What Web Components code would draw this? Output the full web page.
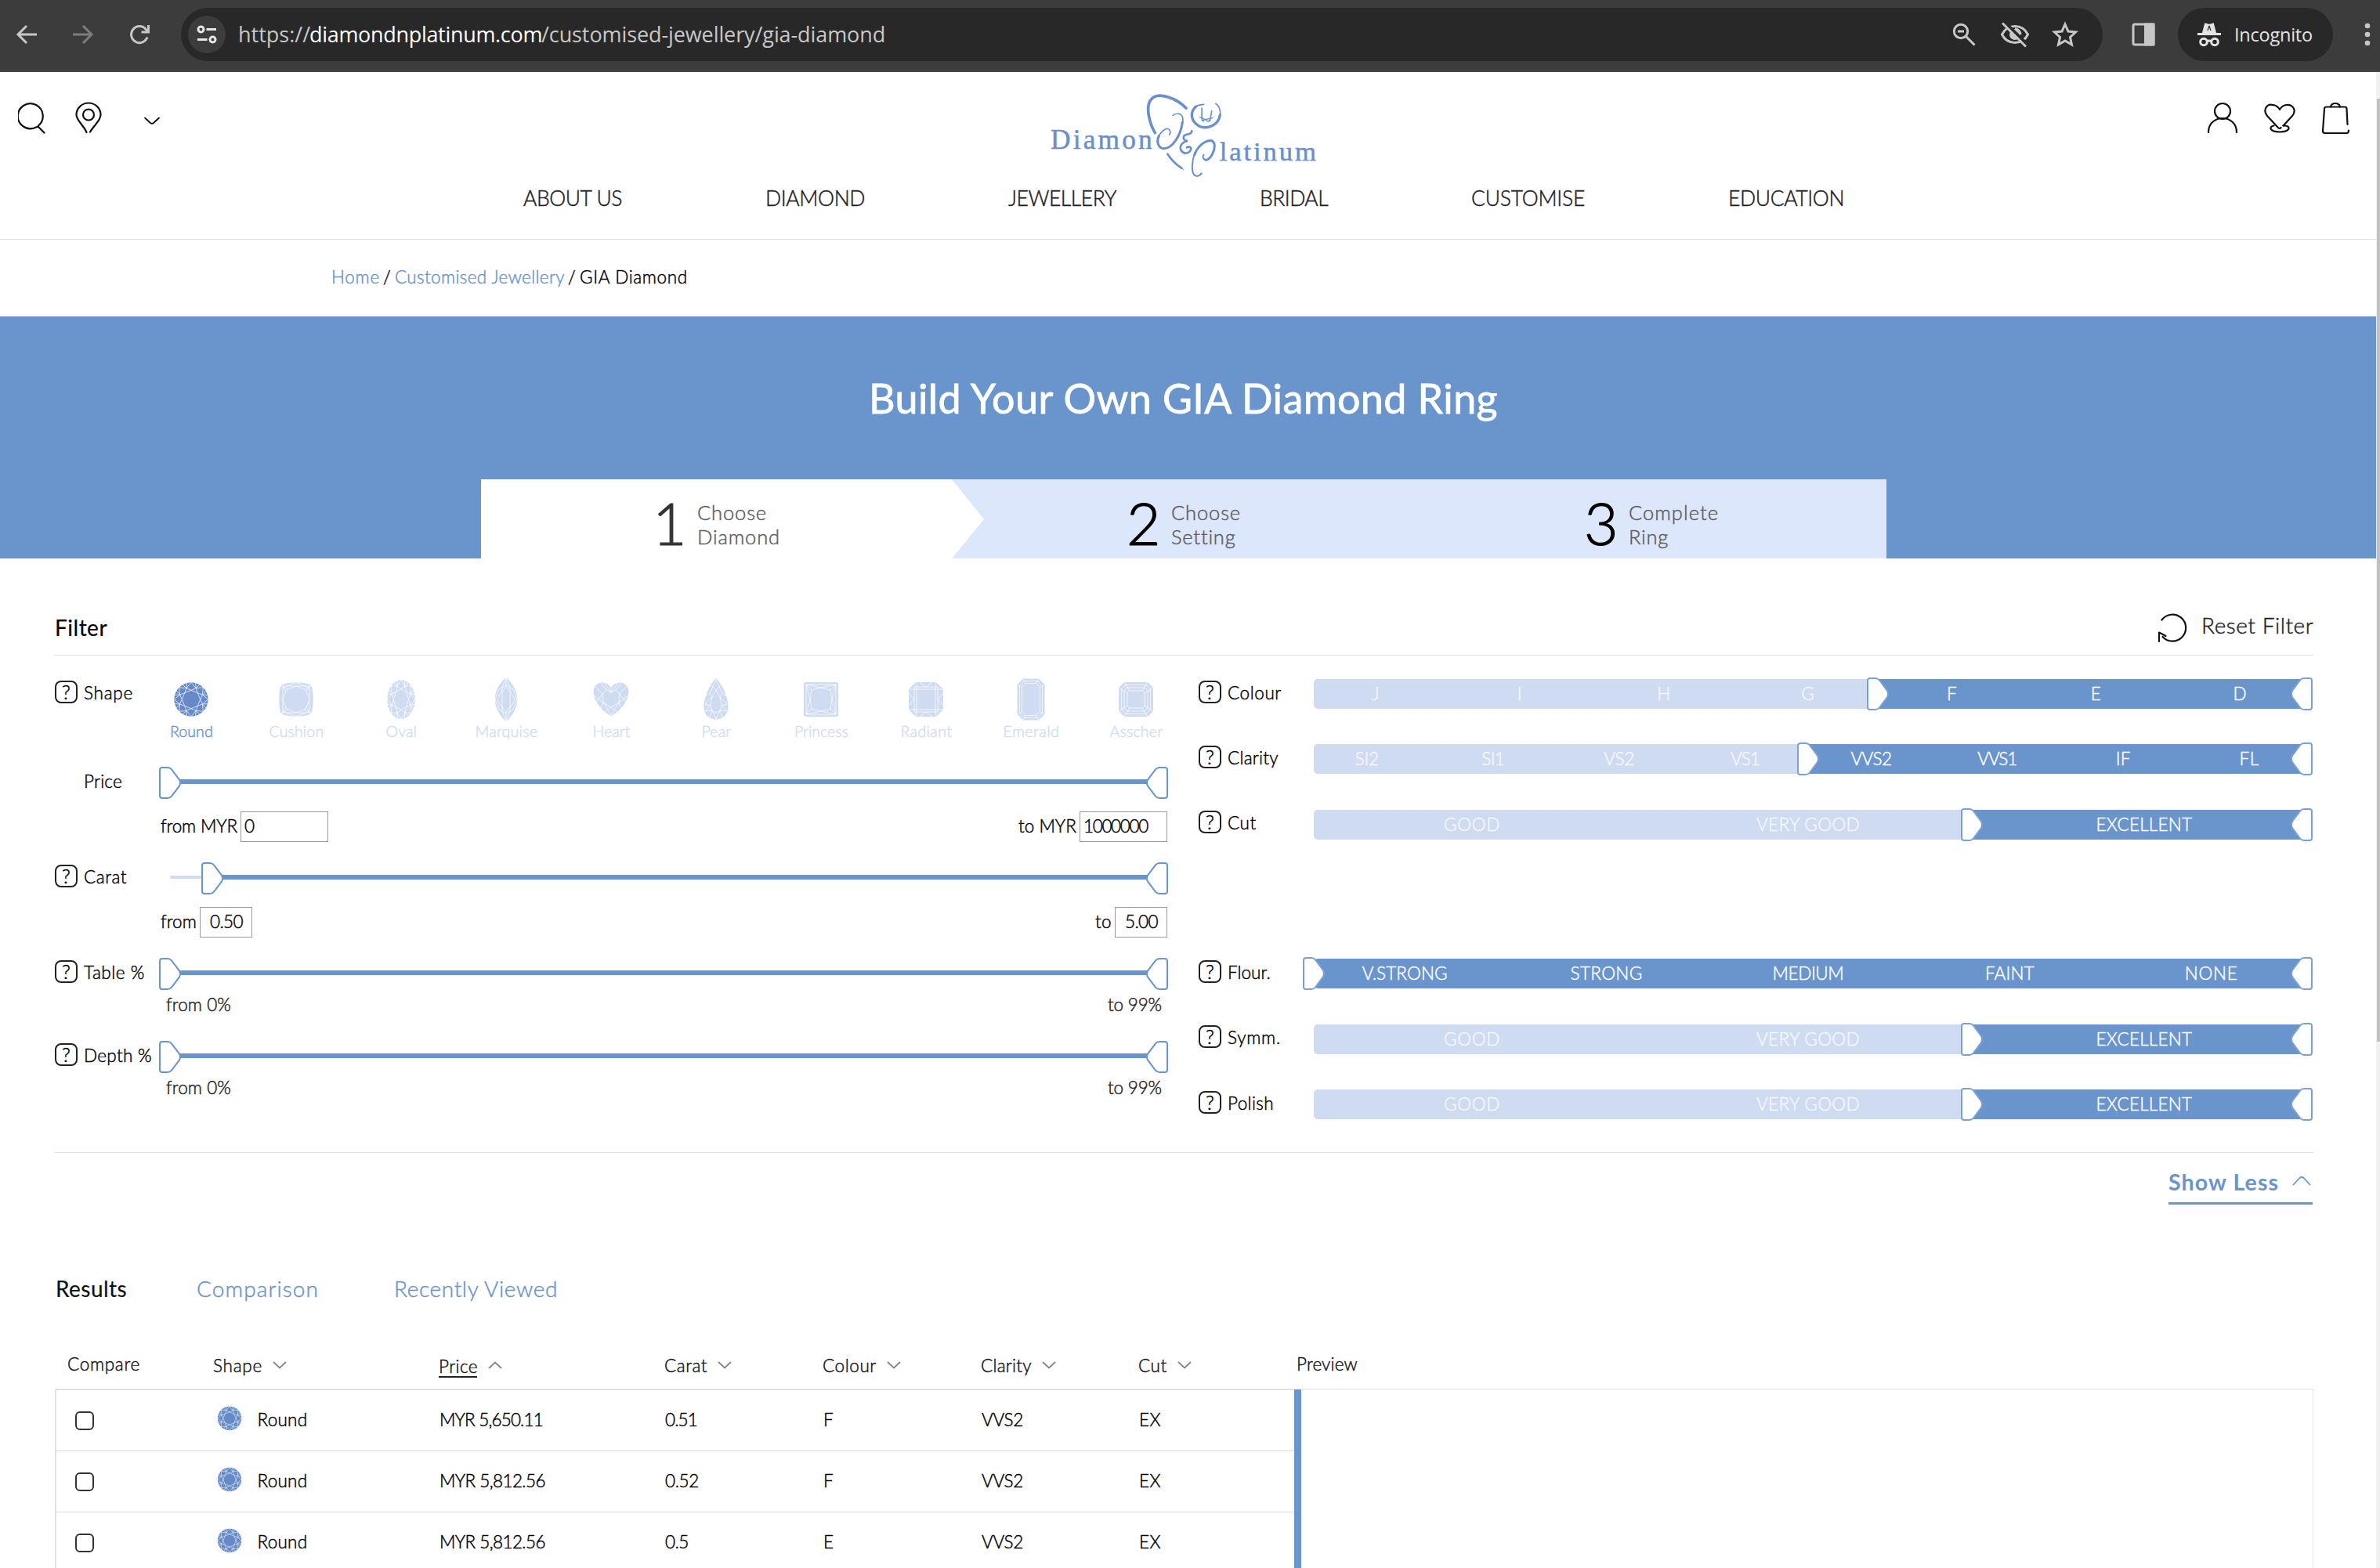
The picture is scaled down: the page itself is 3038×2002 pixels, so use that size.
<!DOCTYPE html>
<html lang="en">
<head>
<meta charset="utf-8">
<title>Build Your Own GIA Diamond Ring</title>
<style>
html,body{margin:0;padding:0}
body{width:3038px;height:2002px;overflow:hidden;background:#fff;color:#000;font-family:Lato,"Noto Sans",sans-serif;font-weight:300;font-size:22.500px;-webkit-text-stroke:.45px;--blue:#6a94cc;--pale:#cfdbf1;--line:#e1e1e1}
</style>
</head>
<body>
<diamond-app></diamond-app>
<script>
const define=(name,html,setup)=>customElements.define(name,class extends HTMLElement{
  connectedCallback(){
    if(this.shadowRoot)return;
    const t=document.createElement('template');
    t.innerHTML=typeof html==='function'?html(this):html;
    this.attachShadow({mode:'open'}).append(t.content.cloneNode(true));
    if(setup)setup(this,this.shadowRoot);
  }
});

/* text tracked out (or in) to a given measure */
define('fit-text','<style>:host{display:inline-block;white-space:nowrap;flex:none}</style><slot></slot>',el=>{
  const s=el.getAttribute('s');if(s)el.style.fontSize=s+'px';
  const w=+el.getAttribute('w');if(!w)return;
  el.style.width='max-content';
  const n=el.textContent.length,size=parseFloat(getComputedStyle(el).fontSize);
  const natural=el.getBoundingClientRect().width;
  const target=w+size*.04;
  el.style.letterSpacing=((target-natural)/n).toFixed(3)+'px';
  el.style.width=w+'px';
});

/* ---------- browser toolbar ---------- */
define('browser-bar',`<style>
:host{display:flex;box-sizing:border-box;width:3038px;height:92px;padding-bottom:2px;background:#3c3c3c;border-bottom:2px solid #474546;align-items:center;font-family:"Open Sans","Noto Sans",sans-serif;font-weight:400;-webkit-text-stroke:0;color:#c7c7c7}
svg{display:block;flex:none;fill:none;stroke:#c7c7c7;stroke-width:3}
.nav{display:flex;gap:44px;padding-left:20px;width:231px;box-sizing:border-box}
.box{display:flex;align-items:center;box-sizing:border-box;width:2453px;height:68px;border-radius:34px;background:#282828;padding-left:9px;padding-right:31px}
.site{width:48px;height:48px;border-radius:50%;background:#3c3c3c;display:grid;place-items:center}
.url{margin-left:16px;font-size:27px;line-height:36px;display:flex;flex:1}
.url b{font-weight:400;color:#fff}
.acts{display:flex;gap:30px;align-items:center}
.panel{margin-left:36px}
.inc{margin-left:28px;box-sizing:border-box;width:198px;height:68px;border-radius:34px;background:#282828;color:#e3e3e3;display:flex;align-items:center;padding-left:24px;gap:16px;font-size:23.5px}
.inc fit-text{margin-top:-1px}
.dots{margin-left:39px}
</style>
<div class="nav">
<svg width="28" height="28" viewBox="0 0 28 28"><path d="M27 14H4M14 3L3 14l11 11"/></svg>
<svg width="28" height="28" viewBox="0 0 28 28" style="stroke:#7d7d7d"><path d="M1 14h23M14 3l11 11-11 11"/></svg>
<svg width="28" height="28" viewBox="0 0 28 28"><path d="M24 17.500A10.500 10.500 0 1 1 22 7.200L25 10.500"/><path d="M25.500 2v9h-9" /></svg>
</div>
<div class="box"><div class="site"><svg width="26" height="24" viewBox="0 0 26 24" style="stroke:#e6e6e6"><circle cx="5.500" cy="5.500" r="3.500"/><path d="M12.500 5.500H25M1 18.500h12.500"/><circle cx="20.500" cy="18.500" r="3.500"/></svg></div>
<div class="url"><fit-text w="91">https://</fit-text><b><fit-text w="296">diamondnplatinum.com</fit-text></b><fit-text w="438">/customised-jewellery/gia-diamond</fit-text></div>
<div class="acts">
<svg width="30" height="30" viewBox="0 0 30 30" style="margin-right:1px"><circle cx="11" cy="11" r="8.700"/><path d="M17.500 17.500L28.500 28.500M7 11h8"/></svg>
<svg width="38" height="34" viewBox="0 0 38 34" style="margin-right:-2px"><path d="M2.500 17C9 3 29 3 35.500 17 29 31 9 31 2.500 17z"/><circle cx="19" cy="17" r="5.500" fill="#c7c7c7"/><path d="M19 10a7 7 0 0 1 7 7"/><path d="M5.500 1L36 31" stroke="#282828" stroke-width="4"/><path d="M3 2.500L33 32.500"/></svg>
<svg width="34" height="34" viewBox="0 0 34 34"><path d="M17 4l4 9 9.500 1-7 6.500 2 9.500-8.500-5-8.500 5 2-9.500-7-6.500 9.500-1z"/></svg></div></div>
<svg class="panel" width="32" height="32" viewBox="0 0 32 32"><rect x="3" y="3" width="26" height="26" rx="2"/><path d="M18.500 3H29v26H18.500z" fill="#c7c7c7"/></svg>
<div class="inc"><svg width="32" height="32" viewBox="0 0 32 32" style="stroke:#e3e3e3"><path d="M1 15.500h30" /><path d="M8 14l3-11.500 5 1.500 5-1.500L24 14z" fill="#e3e3e3" stroke-width="2"/><path d="M16 5l-2 6M16 5l2 6" stroke="#282828" stroke-width="1.200"/><circle cx="9" cy="25.500" r="4.300"/><circle cx="23" cy="25.500" r="4.300"/><path d="M13 25q3-2 6 0"/></svg><fit-text w="99">Incognito</fit-text></div>
<svg class="dots" width="10" height="30" viewBox="0 0 10 30" style="fill:#c7c7c7;stroke:none"><circle cx="5" cy="4" r="3.300"/><circle cx="5" cy="15" r="3.300"/><circle cx="5" cy="26" r="3.300"/></svg>`);

/* ---------- brand mark ---------- */
define('brand-logo',`<style>:host{display:block;width:339px;height:112px}svg{display:block;fill:none;stroke:#6a8fce;stroke-linecap:round}text{fill:#6a8fce;stroke:#6a8fce;stroke-width:1.500;font-family:"Liberation Serif",serif;font-weight:400}</style>
<svg width="339" height="112" viewBox="123 78 1017 336">
<text x="123" y="297" font-size="106" textLength="389">Diamon</text>
<text x="770" y="343" font-size="104" textLength="370">latinum</text>
<path stroke-width="11" d="M523 236C502 200 487 140 505 112C532 70 610 108 642 141"/>
<path stroke-width="8" d="M571 317C585 338 605 358 625 371"/>
<path stroke-width="3" d="M605 358L633 377"/>
<path stroke-width="9" d="M628 195C622 245 590 297 556 296C530 293 530 262 538 247"/>
<path stroke-width="5" d="M591 169C610 155 637 162 628 200M538 250C547 226 573 211 580 227Q584 236 578 243"/>
<path stroke-width="8" d="M664 228C664 242 650 240 642 243C626 249 631 266 648 267C628 270 613 287 624 305C636 321 660 313 661 294C656 289 651 287 645 292"/>
<path stroke-width="9" d="M674 320C690 275 742 248 750 278C755 305 735 338 718 340"/>
<path stroke-width="6" d="M718 340C705 337 705 325 710 320M676 312C663 345 662 385 674 398C684 405 695 400 701 391"/>
<path stroke-width="10" d="M680 135C655 157 660 190 690 209C726 226 766 205 772 168"/>
<path stroke-width="5" d="M680 135Q692 127 710 127M772 170C776 150 767 130 755 124"/>
<path stroke-width="5" d="M702 141C704 158 700 178 704 189M740 152C738 168 736 178 733 190"/>
<path stroke-width="4" d="M695 175C710 180 720 187 727 193M744 179L710 186M704 187l6 4M733 188l-8 4"/>
</svg>`);

/* ---------- site header ---------- */
define('site-header',`<style>
:host{display:block;box-sizing:border-box;height:214px;border-bottom:1px solid var(--line)}
.top{display:grid;grid-template-columns:1341px 339px 1fr;height:138px}
svg{display:block;fill:none;stroke:#111;stroke-width:2.200;stroke-linecap:round;stroke-linejoin:round;flex:none}
.l,.r{display:flex;align-items:flex-start;padding-top:38px}
.l{padding-left:23px}.r{justify-content:flex-end;padding-right:33px;gap:31px}
brand-logo{margin-top:24.500px}
nav{display:flex;gap:184px;padding-left:668px;line-height:46px;font-size:26.500px;color:#222}
</style>
<div class="top"><div class="l">
<svg width="36" height="42" viewBox="0 0 36 42"><path d="M26 30.500A16 16 0 1 0 20.500 33.500L25.500 31.500L33.500 39.500"/></svg>
<svg width="36" height="42" viewBox="0 0 36 42" style="margin-left:36px"><path d="M15.500 39C12 30 2.500 24 2.500 16.500a15.500 15 0 0 1 31 0C33.500 24 25 30 20 38.500"/><circle cx="18" cy="16.500" r="7"/></svg>
<svg width="22" height="12" viewBox="0 0 22 12" style="margin:18px 0 0 52px;stroke-width:1.800"><path d="M2 2.500L9 9q2 1.500 4 0L20 2.500"/></svg>
</div><brand-logo></brand-logo><div class="r">
<svg width="42" height="42" viewBox="0 0 42 42"><circle cx="21" cy="12" r="10"/><path d="M3 39C3 15 39 15 39 39"/></svg>
<svg width="42" height="42" viewBox="-1.500 -3 42 42"><path d="M24 27.500L35.500 15C41.500 7.500 36 .8 29.500.8c-5 0-8 2.500-10 6-2-3.500-5-6-10-6C3-.2-2.500 7.500 3.500 15L17.500 30q2 2 3.500 0"/><path d="M12 27.500C5 29 6.500 35 19.500 35.500 32.500 35 34 29 27 27.500H24"/></svg>
<svg width="38" height="42" viewBox="0 0 38 42"><path d="M34.500 29L33.500 9q0-2.500-2.500-2.500H7.500Q5 6.500 5 9L3 37q0 2.800 2.500 3h28q2.500-.2 2.500-3.500"/><path d="M13 6.500c1-6 11-6 12 0"/></svg>
</div></div>
<nav><fit-text w="125">ABOUT US</fit-text><fit-text w="126">DIAMOND</fit-text><fit-text w="137">JEWELLERY</fit-text><fit-text w="86">BRIDAL</fit-text><fit-text w="144">CUSTOMISE</fit-text><fit-text w="147">EDUCATION</fit-text></nav>`);

define('bread-crumb',`<style>:host{display:flex;box-sizing:border-box;height:98px;padding-bottom:3px;align-items:center;padding-left:423px;font-size:22.500px;color:#000}a{color:var(--blue)}i{font-style:normal;width:20px;text-align:center}</style>
<a><fit-text w="61">Home</fit-text></a><i>/</i><a><fit-text w="216">Customised Jewellery</fit-text></a><i>/</i><fit-text w="137">GIA Diamond</fit-text>`);

/* ---------- hero with steps ---------- */
define('step-item',el=>`<style>:host{display:flex;height:101px;align-items:flex-start}
.n{font-weight:300;-webkit-text-stroke:1.200px;font-size:75px;line-height:90px;padding-top:10px;width:${el.getAttribute('nw')}px;color:${el.getAttribute('c')||'#000'}}
.t{display:flex;flex-direction:column;font-size:25.500px;line-height:31px;padding-top:27px;color:#5c5c5c}</style>
<span class="n">${el.getAttribute('n')}</span><div class="t"><slot></slot></div>`);
define('hero-band',`<style>:host{display:block;height:309px;background:var(--blue)}
h1{margin:0;font-weight:400;color:#fff;font-size:52px;line-height:60px;-webkit-text-stroke:.8px;padding:73.500px 0 74.500px 1109px;display:flex}
.s{display:grid;grid-template-columns:227px 600px 586px 381px;margin-left:614px;width:1794px;height:101px;background:#dde7fb}
.w{grid-column:1/3;grid-row:1;width:642px;height:101px;background:#fff;clip-path:polygon(0 0,601px 0,642px 51px,601px 101px,0 101px)}
step-item{grid-row:1;z-index:1}</style>
<h1><fit-text w="801">Build Your Own GIA Diamond Ring</fit-text></h1>
<div class="s"><div class="w"></div>
<step-item style="grid-column:2;margin-left:-8px" n="1" nw="57" c="#333"><fit-text w="88">Choose</fit-text><fit-text w="105">Diamond</fit-text></step-item>
<step-item style="grid-column:3;margin-left:-3px" n="2" nw="57"><fit-text w="88">Choose</fit-text><fit-text w="81">Setting</fit-text></step-item>
<step-item style="grid-column:4;margin-left:-5px" n="3" nw="57"><fit-text w="114">Complete</fit-text><fit-text w="50">Ring</fit-text></step-item></div>`);

/* ---------- gem icons ---------- */
const P=(a,rx,ry=rx)=>{const t=a*Math.PI/180;return (Math.sin(t)*rx).toFixed(1)+' '+(-Math.cos(t)*ry).toFixed(1)};
const brilliant=(rx,ry)=>{let d='';for(let k=0;k<8;k++){const a=k*45,at=(g,f)=>P(g,rx*f,ry*f),m=at(a+22.5,.72);
 d+=`M${at(a,.54)}L${at(a+45,.54)}M${at(a,.54)}L${m}L${at(a+45,.54)}M${at(a,1)}L${m}L${at(a+45,1)}M${at(a+15,1)}L${m}L${at(a+30,1)}`}return d};
const gems={
round:`<circle r="21.700"/><path class="k" d="${brilliant(21.7,21.7)}"/>`,
oval:`<ellipse rx="17.700" ry="25"/><path class="k" d="${brilliant(17.7,25)}"/>`,
cushion:`<path d="M-15-20Q0-23.500 15-20Q19.500-19 20.500-14Q23 0 20.500 14Q19.500 19 15 20Q0 23.500-15 20Q-19.500 19-20.500 14Q-23 0-20.500-14Q-19.500-19-15-20z"/><path class="k" d="M-17-17H17V17H-17zM0-17L10-13 13-10 17 0 13 10 10 13 0 17-10 13-13 10-17 0-13-10-10-13zM-17-17L-13-10M-17-17L-10-13M17-17L13-10M17-17L10-13M-17 17L-13 10M-17 17L-10 13M17 17L13 10M17 17L10 13M-20-19l4 4M20-19l-4 4M-20 19l4-4M20 19l-4-4M0-21.500L-13-17M0-21.500L13-17M0 21.500L-13 17M0 21.500L13 17"/>`,
marquise:`<path d="M0-28.500C19-10 19 10 0 28.500C-19 10-19-10 0-28.500z"/><path class="k" d="M0-18L9-13M0-18L-9-13M0 18L9 13M0 18L-9 13M-5-15V15M5-15V15M-9-13L-14 0-9 13M9-13L14 0 9 13M0-16L-7-8-11 0-7 8 0 16 7 8 11 0 7-8zM0-28V-16M0 28V16M0-28L-5-15M0-28L5-15M0 28L-5 15M0 28L5 15"/>`,
heart:`<path d="M0-15C5-23 17-24 21.500-15C26-5 15 14 0 21C-15 14-26-5-21.500-15C-17-24-5-23 0-15z"/><path class="k" d="M0-9L6-12 11-7 10 4 0 10-10 4-11-7-6-12zM0-15V-9M0-9L-9-21M0-9L9-21M-6-12L-13-21M6-12L13-21M-11-7L-20-17M11-7L20-17M-11-7L-19 3M11-7L19 3M-10 4L-22-5M10 4L22-5M-10 4L-13 12M10 4L13 12M-10 4L0 20 10 4M0 10L-8 16M0 10L8 16"/>`,
pear:`<path d="M0-26.500C6-23 15-4 15.500 8C16 19 9 25.500 0 25.500C-9 25.500-16 19-15.500 8C-15-4-6-23 0-26.500z"/><path class="k" d="M0-12L5-3 7.500 8 5 14 0 17-5 14-7.500 8-5-3zM0-12L-6-18M0-12L6-18M0-25L8-8 5-3M0-25L-8-8-5-3M-8-8L-13-4M8-8L13-4M-5-3L-14 6-7.500 8-14 15-5 14-8 23M5-3L14 6 7.500 8 14 15 5 14 8 23M-5 14L0 25 5 14"/>`,
princess:`<rect x="-22" y="-22" width="44" height="44" rx="3"/><path class="k" d="M-19-19H19V19H-19zM-19-19L0-15 19-19M-19-19L-14 0-19 19M19-19L14 0 19 19M-19 19L0 15 19 19M-19-19L-12-12M19-19L12-12M-19 19L-12 12M19 19L12 12M-14 0L-12-12 0-15 12-12 14 0 12 12 0 15-12 12z"/>`,
radiant:`<path d="M-13-22H13L22-13V13L13 22H-13L-22 13V-13z"/><path class="k" d="M-12-13H12V13H-12zM-15-16H15V16H-15zM-22-13L-12-13-13-22M22-13L12-13 13-22M-22 13L-12 13-13 22M22 13L12 13 13 22M-15 0L-22-8M-15 0L-22 8M15 0L22-8M15 0L22 8M0-16L-8-22M0-16L8-22M0 16L-8 22M0 16L8 22"/>`,
emerald:`<path d="M-10-26.500H10L17.500-19V19L10 26.500H-10L-17.500 19V-19z"/><path class="k" d="M-8.500-23.500H8.500L14.500-17.500V17.500L8.500 23.500H-8.500L-14.500 17.500V-17.500zM-7-20.500H7L11.500-15.500V15.500L7 20.500H-7L-11.500 15.500V-15.500zM-17-19L-11.500-15.500M-10-26L-7-20.500M17-19L11.500-15.500M10-26L7-20.500M-17 19L-11.500 15.500M-10 26L-7 20.500M17 19L11.500 15.500M10 26L7 20.500"/>`,
asscher:`<path d="M-15-22H15L22-15V15L15 22H-15L-22 15V-15z"/><path class="k" d="M-13-18.500H13L18.500-13V13L13 18.500H-13L-18.500 13V-13zM-11-15H11L15-11V11L11 15H-11L-15 11V-11zM-8-11H8L11-8V8L8 11H-8L-11 8V-8zM-22-15L-11-8M-15-22L-8-11M22-15L11-8M15-22L8-11M-22 15L-11 8M-15 22L-8 11M22 15L11 8M15 22L8 11"/>`};
define('gem-icon',el=>{const z=el.getAttribute('z')||60;return `<style>:host{display:block;flex:none}svg{display:block;fill:${el.hasAttribute('on')?'#668ac8':'#cfdbf1'}}.k{fill:none;stroke:#fff;stroke-opacity:.7;stroke-width:1}</style>
<svg width="${z}" height="${z}" viewBox="-30 -30 60 60">${gems[el.getAttribute('type')]}</svg>`});

define('shape-option',el=>`<style>:host{display:flex;flex-direction:column;align-items:center;font-size:19.500px;line-height:20px;color:${el.hasAttribute('on')?'#6a94cc':'#d0ddf2'}}fit-text{margin-top:1px}</style>
<gem-icon type="${el.textContent.trim().toLowerCase()}" ${el.hasAttribute('on')?'on':''}></gem-icon><fit-text w="${el.getAttribute('w')}">${el.textContent}</fit-text>`);

/* ---------- filter rows ---------- */
define('filter-label',el=>`<style>:host{display:flex;width:133px;flex:none;height:30px;line-height:30px;gap:8px}
.q{box-sizing:border-box;width:29px;height:29px;border:2px solid #222;border-radius:8px;text-align:center;font-size:25px;line-height:25px;flex:none}
.q.off{visibility:hidden}fit-text{padding-top:1px}</style>
${el.hasAttribute('plain')?'<div class="q off"></div>':'<div class="q">?</div>'}<fit-text w="${el.getAttribute('w')}">${el.textContent}</fit-text>`);

const knob=(flip,h,edge)=>`<svg style="${flip?'transform:scaleX(-1)':''}" width="28" height="${h}" viewBox="0 0 28 42" preserveAspectRatio="none"><path d="M4 1H11Q14 1 16 3.500L26 17Q28 21 26 25L16 38.500Q14 41 11 41H4Q1 41 1 38V4Q1 1 4 1z" fill="#fff" stroke="${edge}" stroke-width="2"/></svg>`;

define('range-slider',el=>{const off=+el.getAttribute('off')||0;return `<style>:host{display:flex;align-items:center;height:41px;width:1288px}svg{display:block;flex:none}
.t{flex:1;height:6px;margin:0 -2px 3px;background:var(--blue)}.r{width:${off-14}px;margin-left:14px;margin-bottom:3px;height:4px;border-radius:2px;background:var(--pale)}</style>
${off?'<div class="r"></div>':''}${knob(0,41,'#6a94cc')}<div class="t"></div>${knob(1,41,'#6a94cc')}`});

define('num-box',el=>`<style>:host{display:block;box-sizing:border-box;width:${el.getAttribute('bw')}px;height:39px;line-height:36px;border:1.500px solid #999;padding-left:${el.getAttribute('p')}px;margin-top:1px;color:#000}</style><fit-text w="${el.getAttribute('w')}">${el.textContent}</fit-text>`);

define('range-row',el=>`<style>:host{display:flex;box-sizing:border-box;height:${el.getAttribute('h')}px;padding-top:24px}
filter-label{margin-top:3px}.c{width:1288px}.v{display:flex;justify-content:space-between;margin-top:${el.hasAttribute('small')?'-1px':'15px'};line-height:39px;}
::slotted(div){display:flex;gap:5px}</style>
<filter-label ${el.hasAttribute('plain')?'plain':''} w="${el.getAttribute('lw')}">${el.getAttribute('label')}</filter-label>
<div class="c"><range-slider off="${el.getAttribute('off')||0}"></range-slider><div class="v"><slot></slot></div></div>`);

define('grade-row',el=>{const start=+el.getAttribute('start'),from=+el.getAttribute('from');
const items=el.getAttribute('items').split(',').map(s=>s.split(':'));
return `<style>:host{display:flex;box-sizing:border-box;height:${el.getAttribute('h')||83.3}px;padding-top:28px}
filter-label{margin-top:3.500px}.c{display:grid;width:1289px;height:42px}.c>*{grid-area:1/1}svg{display:block;flex:none}
.b{display:flex;height:38px;margin:2px 2px 0 14px;border-radius:5px;overflow:hidden;background:var(--pale)}
.b i{flex:none;width:${Math.max(0,start-4)}px}.b b{flex:1;background:var(--blue)}
.l{display:grid;grid-template-columns:repeat(${items.length},1fr);width:1287px;margin-left:1px;line-height:42px;text-align:center;font-size:22.500px;color:#fff}
.l .off{color:#f6f8fd}.k{display:flex;justify-content:space-between;padding-left:${start}px}</style>
<filter-label w="${el.getAttribute('lw')}">${el.getAttribute('label')}</filter-label>
<div class="c"><div class="b"><i></i><b></b></div><div class="l">${items.map(([t,w],i)=>`<span class="${i<from?'off':''}"><fit-text ${w?`w="${w}"`:''}>${t}</fit-text></span>`).join('')}</div>
<div class="k">${knob(0,42,'#7ba0d4')}${knob(1,42,'#7ba0d4')}</div></div>`});

define('filter-panel',`<style>:host{display:block;width:2883px;margin-left:70px;height:859px}
.h{display:flex;justify-content:space-between;box-sizing:border-box;height:124px;border-bottom:1px solid var(--line);padding-top:68px;font-size:28px;line-height:40px}
.h>b{font-weight:400;-webkit-text-stroke:.2px;color:#000}
.rs{display:flex;color:#222;gap:17px;padding-right:1px;line-height:34px}.rs svg{margin-top:0}
.g{display:grid;grid-template-columns:1460px 1423px;height:634px;border-bottom:1px solid var(--line)}
.shape{display:flex;height:118px;box-sizing:border-box;padding-top:26px}.shape filter-label{margin-top:5.500px}
.o{display:grid;grid-template-columns:repeat(10,134px);margin:0 -26px;width:1340px;flex:none}
.d{color:#222;padding:0 9px}
svg{display:block;fill:none;stroke:#111;stroke-width:2.200;stroke-linecap:round;stroke-linejoin:round}
.less{display:flex;margin:20px 1px 0 auto;width:184px;box-sizing:border-box;height:46px;border-bottom:3px solid var(--blue);font-size:28.500px;font-weight:700;-webkit-text-stroke:0;color:var(--blue);line-height:34px;gap:18px}
.less svg{stroke:var(--blue);margin-top:8px;stroke-width:1.800}
</style>
<div class="h"><b><fit-text w="66">Filter</fit-text></b><div class="rs"><svg width="42" height="42" viewBox="0 0 42 42"><path d="M8.500 10.500A17 17 0 1 1 9.500 32M5 38V26.500L13.500 31"/></svg><fit-text w="142">Reset Filter</fit-text></div></div>
<div class="g"><div>
<div class="shape"><filter-label w="62">Shape</filter-label><div class="o">
<shape-option on w="54">Round</shape-option><shape-option w="69">Cushion</shape-option><shape-option w="39">Oval</shape-option><shape-option w="79">Marquise</shape-option><shape-option w="47">Heart</shape-option><shape-option w="37">Pear</shape-option><shape-option w="68">Princess</shape-option><shape-option w="65">Radiant</shape-option><shape-option w="71">Emerald</shape-option><shape-option w="67">Asscher</shape-option></div></div>
<range-row h="122" plain label="Price" lw="48"><div style="padding-left:2px"><fit-text w="97">from MYR</fit-text><num-box bw="112" p="4" w="13">0</num-box></div><div style="padding-right:1px"><fit-text w="73">to MYR</fit-text><num-box bw="112" p="4" w="81">1000000</num-box></div></range-row>
<range-row h="122" label="Carat" lw="54" off="54"><div style="padding-left:2px"><fit-text w="45">from</fit-text><num-box bw="67" p="12" w="41">0.50</num-box></div><div style="padding-right:1px"><fit-text w="20">to</fit-text><num-box bw="67" p="12" w="41">5.00</num-box></div></range-row>
<range-row h="106" small label="Table %" lw="77"><div class="d"><fit-text w="82">from 0%</fit-text></div><div class="d"><fit-text w="68">to 99%</fit-text></div></range-row>
<range-row h="106" small label="Depth %" lw="86"><div class="d"><fit-text w="82">from 0%</fit-text></div><div class="d"><fit-text w="68">to 99%</fit-text></div></range-row>
</div><div>
<grade-row label="Colour" lw="68" start="720" from="4" items="J,I,H,G,F,E,D"></grade-row>
<grade-row label="Clarity" lw="64" start="631" from="4" items="SI2:30,SI1:28,VS2:38,VS1:36,VVS2:51,VVS1:49,IF:18,FL:24"></grade-row>
<grade-row label="Cut" lw="36" start="840" from="2" h="190.900" items="GOOD:71,VERY GOOD:131,EXCELLENT:122"></grade-row>
<grade-row label="Flour." lw="54" start="0" from="0" h="83.500" items="V.STRONG:108,STRONG:91,MEDIUM:90,FAINT:62,NONE:67"></grade-row>
<grade-row label="Symm." lw="67" start="840" from="2" items="GOOD:71,VERY GOOD:131,EXCELLENT:122"></grade-row>
<grade-row label="Polish" lw="58" start="840" from="2" items="GOOD:71,VERY GOOD:131,EXCELLENT:122"></grade-row>
</div></div>
<div class="less"><fit-text w="140">Show Less</fit-text><svg width="24" height="14" viewBox="0 0 24 14"><path d="M1.500 12.500L9.500 4q2.500-2 5 0L22.500 12.500"/></svg></div>`);

/* ---------- results ---------- */
define('sort-head',el=>`<style>:host{display:flex;gap:14px;align-items:center}svg{fill:none;stroke:#888;stroke-width:2;display:block}
.u{border-bottom:2px solid #222;line-height:25px;margin-bottom:-4px}</style><span class="${el.hasAttribute('up')?'u':''}"><fit-text w="${el.getAttribute('w')}">${el.textContent}</fit-text></span>
<svg width="18" height="10" viewBox="0 0 18 10"><path d="${el.hasAttribute('up')?'M1 9L9 1.500 17 9':'M1 1L9 8.500 17 1'}"/></svg>`);
const cols='grid-template-columns:202px 288px 288px 202px 202px 201px 1fr';
define('result-row',el=>{const [p,pw,c,cw,k]=el.getAttribute('v').split('|');return `<style>:host{display:grid;${cols};box-sizing:border-box;height:78px;border-bottom:1px solid #ddd;margin-left:-2px;width:1582px;align-items:center;padding-bottom:2px;color:#000}
.x{box-sizing:border-box;width:24px;height:24px;border:2px solid #333;border-radius:6px;margin:3px 0 0 26px}.s{display:flex;align-items:center;gap:15px}
span{padding-left:1px}.s gem-icon{margin:-5px 0 -1px -.5px}</style>
<div class="x"></div><div class="s"><gem-icon on type="round" z="42"></gem-icon><fit-text w="63">Round</fit-text></div><span><fit-text w="${pw}">${p}</fit-text></span><span><fit-text w="${cw}">${c}</fit-text></span><span>${k}</span><span><fit-text w="52">VVS2</fit-text></span><span><fit-text w="27">EX</fit-text></span>`});
define('results-panel',`<style>:host{display:block;width:2883px;margin-left:70px}
.tabs{display:flex;font-size:28px;line-height:40px;height:104px;padding-top:53px;color:#111;padding-left:1px}.tabs a{color:var(--blue)}
.hd{display:grid;${cols.replace('1fr','203px 1fr')};align-items:center;height:44px;padding-bottom:0;color:#111}.hd>*{margin-top:-16px}
.bd{display:flex;height:280px}.t{box-sizing:border-box;width:1582px;border:2px solid var(--line);border-width:2px 0 0 2px}
.bar{width:9px;background:var(--blue);margin-top:1px}.pv{flex:1;border:1px solid var(--line);border-width:1px 1px 0 0}</style>
<div class="tabs"><fit-text w="90" style="font-weight:400;-webkit-text-stroke:.2px">Results</fit-text><a style="margin-left:90px"><fit-text w="155">Comparison</fit-text></a><a style="margin-left:97px"><fit-text w="208">Recently Viewed</fit-text></a></div>
<div class="hd"><fit-text w="92" style="margin:-19px 0 0 16px">Compare</fit-text><sort-head w="62">Shape</sort-head><sort-head up w="49">Price</sort-head><sort-head w="54">Carat</sort-head><sort-head w="68">Colour</sort-head><sort-head w="64">Clarity</sort-head><sort-head w="36">Cut</sort-head><fit-text w="77" style="margin:-19px 0 0 -1px">Preview</fit-text></div>
<div class="bd"><div class="t"><result-row v="MYR 5,650.11|131|0.51|40|F"></result-row><result-row v="MYR 5,812.56|134|0.52|42|F"></result-row><result-row v="MYR 5,812.56|134|0.5|29|E"></result-row></div><div class="bar"></div><div class="pv"></div></div>`);

define('page-scrollbar',`<style>:host{display:block;width:5px;height:1910px;background:#f1f1f1}div{margin:34px 0 0 1px;height:1204px;background:#c1c1c1}:host::before{content:"";display:table}</style><div></div>`);

define('diamond-app',`<style>:host{display:block;width:3038px;height:2002px;overflow:hidden}.p{display:flex;height:1910px}main{width:3033px;overflow:hidden}</style>
<browser-bar></browser-bar><div class="p"><main><site-header></site-header><bread-crumb></bread-crumb><hero-band></hero-band><filter-panel></filter-panel><results-panel></results-panel></main><page-scrollbar></page-scrollbar></div>`);
</script>
</body>
</html>
